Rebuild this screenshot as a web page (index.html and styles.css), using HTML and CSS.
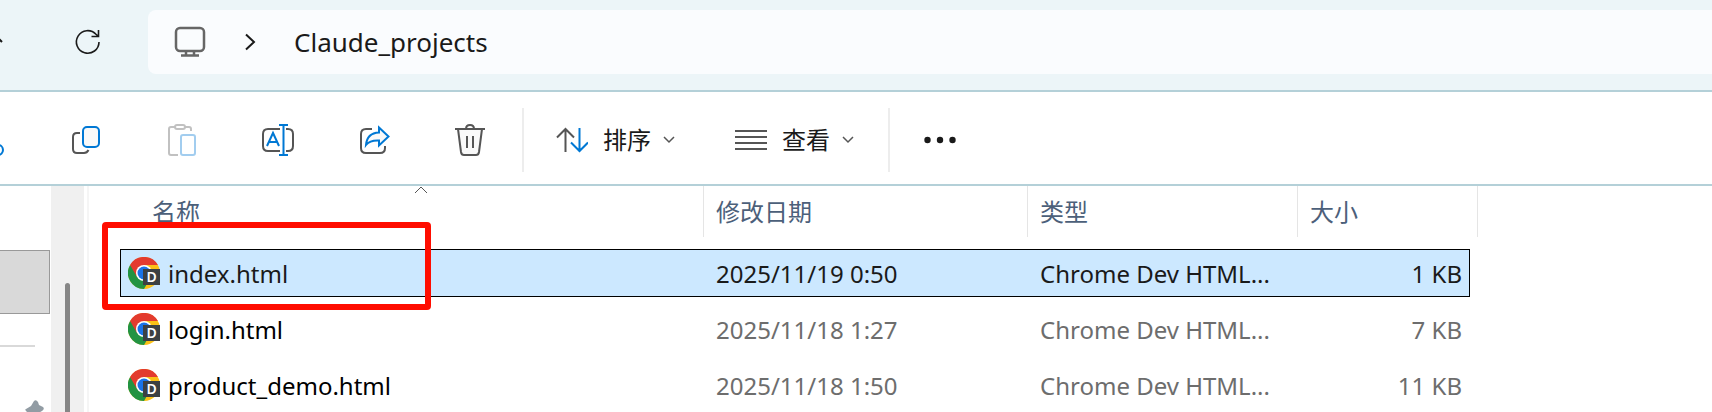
FILE: index.html
```
<!DOCTYPE html>
<html lang="zh-CN">
  <head>
    <meta charset="utf-8">
    <title>Claude_projects</title>
    <link rel="stylesheet" href="styles.css">
  </head>
  <body>
    <!-- shared file icon -->
    <svg class="defs" width="0" height="0" aria-hidden="true">
      <symbol id="chrome" viewBox="0 0 32 32">
        <circle cx="16" cy="16" r="16" fill="#fbc116"/>
        <path d="M16 16 L2.1 8 A16 16 0 0 0 16 32 L23 20 Z" fill="#229342"/>
        <path d="M16 8 H29.9 A16 16 0 0 0 2.1 8 L9 20 Z" fill="#e33b2e"/>
        <circle cx="16" cy="16" r="8" fill="#fff"/>
        <circle cx="16" cy="16" r="6.500" fill="#1a73e8"/>
      </symbol>
    </svg>

    <header class="navbar">
      <button class="up" aria-label="Up">
        <svg width="24" height="24" viewBox="0 0 24 24"><path d="M12 22V2M2 12L12 2L22 12"/></svg>
      </button>
      <button class="refresh" aria-label="Refresh">
        <svg width="28" height="28" viewBox="0 0 28 28"><path d="M25 14A11.3 11.3 0 1 1 22 6.3L24.500 8.500M24.500 2V8.500H17.500"/></svg>
      </button>
      <nav class="address">
        <svg class="pc" width="32" height="32" viewBox="0 0 32 32"><rect x="2" y="2" width="28" height="23" rx="4"/><path d="M12 25v4M20 25v4M7 29.500H25"/></svg>
        <svg class="arrow" width="12" height="18" viewBox="0 0 12 18"><path d="M2 1.500L10 9L2 16.500"/></svg>
        <a href="#">Claude_projects</a>
      </nav>
    </header>

    <div class="toolbar">
      <button class="icon cut" aria-label="Cut">
        <svg width="32" height="32" viewBox="0 0 32 32"><g class="blue"><circle cx="7" cy="26" r="5"/><circle cx="24" cy="26" r="5"/></g><path d="M9 21L22 1M22 21L10 1"/></svg>
      </button>
      <button class="icon" aria-label="Copy">
        <svg width="32" height="32" viewBox="0 0 32 32"><path d="M10 9H7Q3 9 3 13V25Q3 29 7 29H14Q17 29 18.500 26"/><rect class="blue fill" x="13" y="3" width="16" height="20" rx="4"/></svg>
      </button>
      <button class="icon" aria-label="Paste" disabled>
        <svg width="32" height="32" viewBox="0 0 32 32"><path d="M9 3H5Q3 3 3 5V29Q3 31 5 31H12M19 3H23Q25 3 25 5V7"/><rect x="9" y="1" width="10" height="4" rx="2"/><rect class="blue" x="15" y="11" width="14" height="20" rx="2"/></svg>
      </button>
      <button class="icon" aria-label="Rename">
        <svg width="32" height="32" viewBox="0 0 32 32"><path d="M18 5H6Q1 5 1 10V22Q1 27 6 27H18M24 5H26Q31 5 31 10V22Q31 27 26 27H24"/><path class="blue" d="M5 22L11 9L17 22M7 18H15M17 1H26M17 31H26M21.500 1V31"/></svg>
      </button>
      <button class="icon" aria-label="Share">
        <svg width="32" height="32" viewBox="0 0 32 32"><path d="M14 5H8Q3 5 3 10V24Q3 29 8 29H22Q27 29 27 24V22"/><path class="blue fill" d="M21 3.500L30.500 12.500L21 21.500V16.500Q12 16 8 21Q9 9 21 8.500Z"/></svg>
      </button>
      <button class="icon" aria-label="Delete">
        <svg width="32" height="32" viewBox="0 0 32 32"><path class="fill" d="M4 5L7 28Q7.500 31 10 31H22Q24.500 31 25 28L28 5"/><path d="M1 5H31M12 5Q12 1 16 1Q20 1 20 5M13 12V24M19 12V24"/></svg>
      </button>
      <span class="divider"></span>
      <button class="menu sort">
        <svg width="32" height="32" viewBox="0 0 32 32"><path d="M9.500 28V5M1 13.500L9.500 5L18 13.500"/><path class="blue" d="M23.500 4V27M15 18.500L23.500 27L32 18.500"/></svg>
        排序
        <svg class="caret" width="12" height="8" viewBox="0 0 12 8"><path d="M1 1L6 6L11 1"/></svg>
      </button>
      <button class="menu view">
        <svg width="32" height="32" viewBox="0 0 32 32"><path d="M0 7H32M0 13H32M0 19H32M0 25H32"/></svg>
        查看
        <svg class="caret" width="12" height="8" viewBox="0 0 12 8"><path d="M1 1L6 6L11 1"/></svg>
      </button>
      <span class="divider"></span>
      <button class="more" aria-label="More">
        <svg width="32" height="8" viewBox="0 0 32 8"><circle cx="3.500" cy="4" r="3.200"/><circle cx="16" cy="4" r="3.200"/><circle cx="28.500" cy="4" r="3.200"/></svg>
      </button>
    </div>

    <main class="content">
      <aside class="sidebar">
        <div class="current"></div>
        <hr>
        <svg class="pin" width="20" height="20" viewBox="0 0 20 20"><path d="M9 1Q11 -1 13 2L14 5L18 7Q20 9 17 11L8 16L2 12Q-1 9 1 9L6 6Z"/></svg>
      </aside>
      <div class="scrollbar"><div class="thumb"></div></div>
      <section class="files">
        <table>
          <colgroup>
            <col class="col-name"><col class="col-date"><col class="col-type"><col class="col-size"><col class="col-end">
          </colgroup>
          <thead>
            <tr>
              <th><button class="name">名称</button>
                <svg class="asc" width="14" height="8" viewBox="0 0 14 8"><path d="M1 7L7 1L13 7"/></svg>
              </th>
              <th><button>修改日期</button></th>
              <th><button>类型</button></th>
              <th colspan="2"><button>大小</button></th>
            </tr>
          </thead>
          <tbody>
            <tr class="selected">
              <td><div class="file"><span class="logo"><svg width="32" height="32"><use href="#chrome"/></svg><b>D</b></span><span class="filename">index.html</span></div></td>
              <td>2025/11/19 0:50</td>
              <td>Chrome Dev HTML...</td>
              <td>1 KB</td>
            </tr>
            <tr>
              <td><div class="file"><span class="logo"><svg width="32" height="32"><use href="#chrome"/></svg><b>D</b></span><span class="filename">login.html</span></div></td>
              <td>2025/11/18 1:27</td>
              <td>Chrome Dev HTML...</td>
              <td>7 KB</td>
            </tr>
            <tr>
              <td><div class="file"><span class="logo"><svg width="32" height="32"><use href="#chrome"/></svg><b>D</b></span><span class="filename">product_demo.html</span></div></td>
              <td>2025/11/18 1:50</td>
              <td>Chrome Dev HTML...</td>
              <td>11 KB</td>
            </tr>
          </tbody>
        </table>
        <div class="highlight"></div>
      </section>
    </main>
  </body>
</html>
```
FILE: styles.css
```
* {
  box-sizing: border-box;
}
body {
  margin: 0;
  height: 100vh;
  overflow: hidden;
  display: flex;
  flex-direction: column;
  background: #fff;
  color: #1a1a1a;
  font: 24px/32px "Noto Sans", "Noto Sans CJK SC", sans-serif;
}
button {
  padding: 0;
  border: 0;
  background: none;
  color: inherit;
  font: inherit;
}
svg {
  display: block;
  flex: none;
  fill: none;
  stroke: #555;
  stroke-width: 2;
}
.defs {
  position: absolute;
}
#chrome * {
  stroke: none;
}

/* address row */
.navbar {
  display: flex;
  align-items: center;
  flex: none;
  padding: 10px 0 16px;
  background: #ecf5f8;
  border-bottom: 2px solid #b4d0d8;
}
.up {
  margin-left: -20px;
}
.up svg,
.refresh svg {
  stroke: #1a1a1a;
}
.refresh {
  margin-left: 70px;
}
.refresh svg {
  stroke-width: 1.6;
}
.address {
  display: flex;
  align-items: center;
  flex: 1;
  height: 64px;
  margin-left: 46px;
  padding-left: 26px;
  background: #fafcfe;
  border-radius: 8px 0 0 8px;
}
.pc {
  stroke: #666;
  stroke-width: 2.5;
}
.arrow {
  margin: 0 38px;
  stroke: #1a1a1a;
}
.address a {
  color: #1a1a1a;
  font-size: 26px;
  text-decoration: none;
}

/* command bar */
.toolbar {
  display: flex;
  align-items: center;
  flex: none;
  height: 94px;
  padding-top: 4px;
  border-bottom: 2px solid #b4d0d8;
}
.icon {
  margin-right: 64px;
}
.icon.cut {
  margin-left: -26px;
}
.icon:disabled {
  opacity: 0.36;
}
.toolbar .blue {
  stroke: #0078d4;
}
.fill {
  fill: #f9f9f9;
}
.divider {
  width: 2px;
  height: 64px;
  background: #ededed;
}
.icon + .divider {
  margin-left: -28px;
}
.menu {
  display: flex;
  align-items: center;
  gap: 15px;
}
.sort {
  margin-left: 32px;
}
.view {
  margin: 0 34px 0 60px;
}
.caret {
  margin-left: -3px;
  stroke-width: 1.5;
}
.more {
  margin-left: 34px;
}
.more svg {
  fill: #1a1a1a;
  stroke: none;
}

/* file list */
.content {
  display: flex;
  flex: 1;
  min-height: 0;
}
.sidebar {
  width: 51px;
  padding-top: 64px;
}
.current {
  height: 64px;
  margin-right: 1px;
  background: #d9d9d9;
  border: 1px solid #999;
  border-left: 0;
}
.sidebar hr {
  width: 35px;
  height: 2px;
  margin: 31px 0 53px;
  border: 0;
  background: #d9d9d9;
}
.pin {
  margin-left: 25px;
  fill: #929ca4;
  stroke: none;
}
.scrollbar {
  width: 33px;
  padding: 97px 14px 0;
  background: #f0f0f0;
}
.thumb {
  height: 100%;
  background: #868686;
  border-radius: 3px 3px 0 0;
}
.files {
  position: relative;
  flex: 1;
  margin-left: 3px;
  padding-left: 31px;
  border-left: 2px solid #f5f5f5;
}
table {
  width: 1358px;
  margin-top: -8px;
  table-layout: fixed;
  border-spacing: 0 8px;
}
.col-name {
  width: 584px;
}
.col-date {
  width: 324px;
}
.col-type {
  width: 270px;
}
.col-size {
  width: 172px;
}
.col-end {
  width: 8px;
}
th {
  position: relative;
  height: 55px;
  padding: 0;
  color: #4c607a;
  font-weight: normal;
  vertical-align: top;
}
th button {
  display: block;
  width: 100%;
  height: 51px;
  padding: 0 12px;
  border-right: 1px solid #e5e5e5;
  text-align: left;
}
th .name {
  padding-left: 32px;
}
.asc {
  position: absolute;
  top: 0;
  left: 294px;
  stroke-width: 1;
}
td {
  height: 48px;
  padding: 2px 12px 0;
  border: 1px solid transparent;
  border-width: 1px 0;
  color: #6d6d6d;
}
td:first-child {
  padding: 0 0 0 7px;
  border-left-width: 1px;
  color: #000;
}
td:last-child {
  padding-right: 7px;
  border-right-width: 1px;
  text-align: right;
}
.selected td {
  background: #cce8ff;
  border-color: #000;
  color: #1a1a1a;
}
.file {
  display: flex;
  align-items: center;
  gap: 8px;
}
.filename {
  padding-top: 2px;
}
.logo {
  position: relative;
}
/* "D" badge over the logo corner */
.logo b {
  position: absolute;
  right: 0;
  bottom: 4px;
  width: 17px;
  background: #3c4043;
  color: #fff;
  font-size: 14px;
  font-weight: 600;
  line-height: 16px;
  text-align: center;
}
.highlight {
  position: absolute;
  top: 36px;
  left: 13px;
  width: 329px;
  height: 88px;
  border: 6px solid #ff0d00;
  border-radius: 4px;
}
```
